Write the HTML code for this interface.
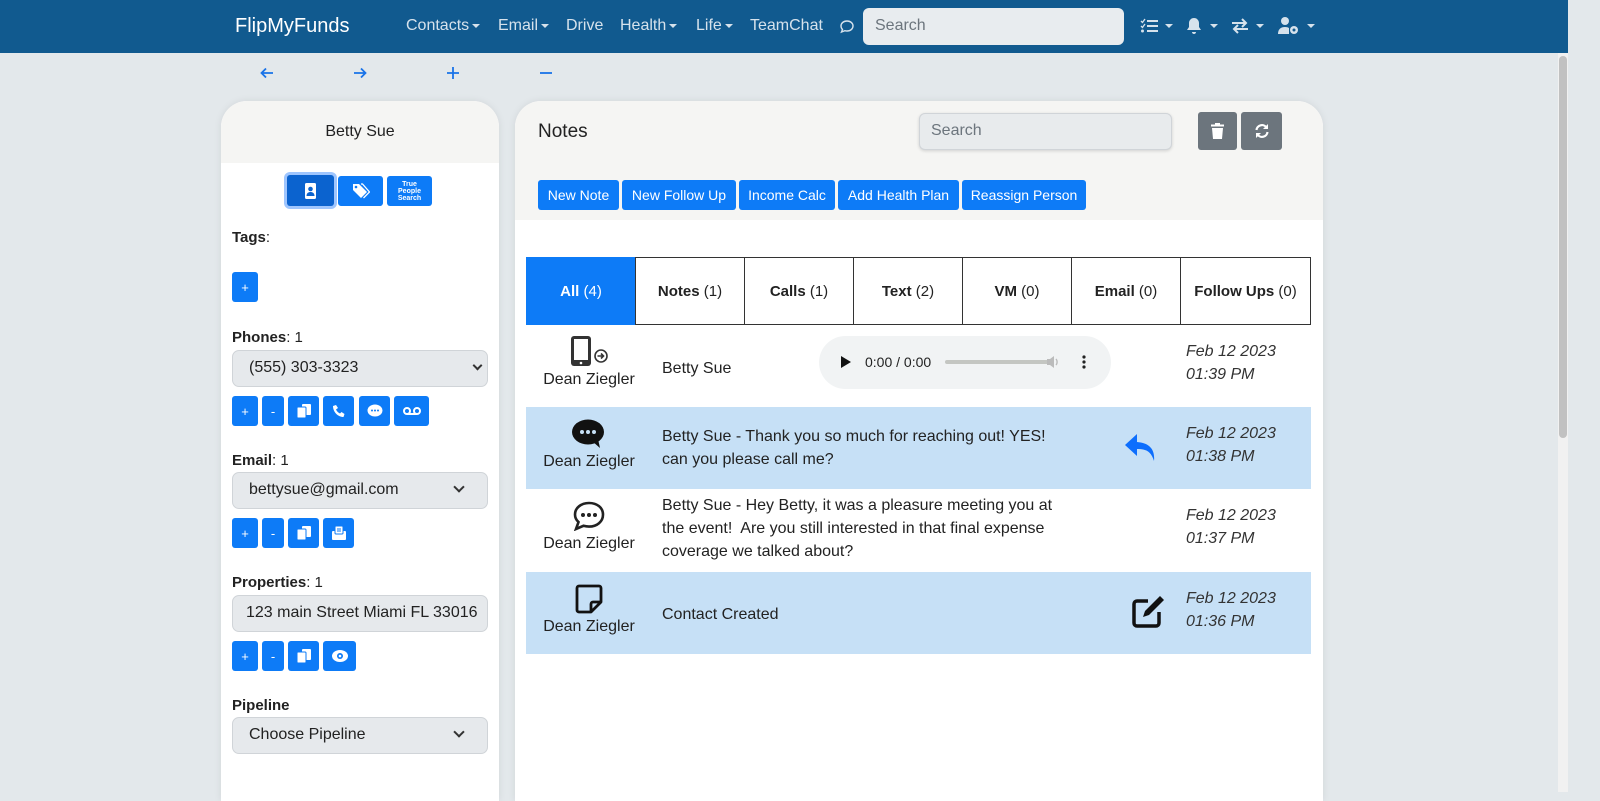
<!DOCTYPE html>
<html><head><meta charset="utf-8">
<style>
*{box-sizing:border-box;margin:0;padding:0}
body{width:1600px;height:792px;overflow:hidden;background:#e3e8eb;font-family:"Liberation Sans",sans-serif;color:#212529;position:relative}
.a{position:absolute}
.nav{left:0;top:0;width:1568px;height:53px;background:#115a8f}
.nav .t{color:#d6e2ec;font-size:16px;top:17px}
.car{display:inline-block;border-left:4px solid transparent;border-right:4px solid transparent;border-top:4px solid #d6e2ec;vertical-align:middle;margin-left:3px}
.btn{position:absolute;background:#0d7bf7;color:#fff;border-radius:3px;font-size:14px;display:flex;align-items:center;justify-content:center}
.sel{position:absolute;left:232px;width:256px;height:37px;background:#e6e9ec;border:1px solid #d0d4d8;border-radius:7px;font-size:16px;padding:8px 16px;color:#222}
.lbl{position:absolute;left:232px;font-size:15px;color:#222}
.lbl b{font-weight:bold}
.chev{position:absolute;right:16px;top:14px;width:8px;height:8px;border-right:2px solid #333;border-bottom:2px solid #333;transform:rotate(45deg)}
.tab{position:absolute;top:257px;height:68px;border:1px solid #333;font-size:15px;display:flex;align-items:center;justify-content:center;background:#fff;color:#222}
.row{position:absolute;left:526px;width:785px;height:82px}
.who{position:absolute;left:3px;width:120px;text-align:center;font-size:16px;color:#222;top:46px;white-space:nowrap}
.dt{position:absolute;left:660px;font-style:italic;font-size:16px;line-height:23px;color:#333;top:15px}
.msg{position:absolute;left:136px;font-size:16px;line-height:23px;color:#222}
.ic{position:absolute}
</style></head><body>
<div class="a nav">
 <div class="a" style="left:235px;top:15px;color:#fff;font-size:20px">FlipMyFunds</div>
 <div class="a t" style="left:406px">Contacts<span class="car"></span></div>
 <div class="a t" style="left:498px">Email<span class="car"></span></div>
 <div class="a t" style="left:566px">Drive</div>
 <div class="a t" style="left:620px">Health<span class="car"></span></div>
 <div class="a t" style="left:696px">Life<span class="car"></span></div>
 <div class="a t" style="left:750px">TeamChat</div>
 <svg class="a" style="left:839px;top:19px" width="16" height="16" viewBox="0 0 16 16"><path d="M8 2c3.5 0 6 2.2 6 5s-2.5 5-6 5c-.8 0-1.5-.1-2.2-.3L2.5 13l1-2.5C2.5 9.6 2 8.4 2 7c0-2.8 2.5-5 6-5z" fill="none" stroke="#d6e2ec" stroke-width="1.4"/></svg>
 <div class="a" style="left:863px;top:8px;width:261px;height:37px;background:#e8ecef;border-radius:6px;color:#6c757d;font-size:16px;padding:9px 12px">Search</div>
 <svg class="a" style="left:1140px;top:18px" width="18" height="16" viewBox="0 0 18 16"><g fill="#d6e2ec"><rect x="7" y="2" width="11" height="2"/><rect x="7" y="7" width="11" height="2"/><rect x="7" y="12" width="11" height="2"/><circle cx="2.5" cy="13" r="1.5"/></g><path d="M1 3l1.5 1.5L5 1M1 8l1.5 1.5L5 6" stroke="#d6e2ec" stroke-width="1.3" fill="none"/></svg>
 <span class="a car" style="left:1162px;top:24px"></span>
 <svg class="a" style="left:1186px;top:17px" width="16" height="18" viewBox="0 0 16 18"><path d="M8 1c-3 0-5 2.5-5 5v4L1 13h14l-2-3V6c0-2.5-2-5-5-5z M6 15h4c0 1.2-1 2-2 2s-2-.8-2-2z" fill="#d6e2ec"/></svg>
 <span class="a car" style="left:1207px;top:24px"></span>
 <svg class="a" style="left:1231px;top:17px" width="18" height="18" viewBox="0 0 18 18"><path d="M1 6h14M11 2l4 4-4 4M17 12H3M7 8l-4 4 4 4" stroke="#d6e2ec" stroke-width="2" fill="none"/></svg>
 <span class="a car" style="left:1253px;top:24px"></span>
 <svg class="a" style="left:1278px;top:16px" width="22" height="20" viewBox="0 0 22 20"><circle cx="7" cy="5" r="4" fill="#d6e2ec"/><path d="M0 18c0-5 3-7 7-7 2 0 3 .4 4 1v6z" fill="#d6e2ec"/><circle cx="16" cy="14" r="4" fill="#d6e2ec"/><circle cx="16" cy="14" r="1.5" fill="#115a8f"/></svg>
 <span class="a car" style="left:1304px;top:24px"></span>
</div>
<div class="a" style="left:1558px;top:53px;width:10px;height:739px;background:#f1f1f1"></div>
<div class="a" style="left:1559px;top:56px;width:8px;height:382px;background:#c1c1c1;border-radius:4px"></div>
<svg class="a" style="left:260px;top:67px" width="14" height="12" viewBox="0 0 14 12"><path d="M13 6H2M6 1.5L1.5 6 6 10.5" stroke="#1a73e8" stroke-width="1.8" fill="none"/></svg>
<svg class="a" style="left:353px;top:67px" width="14" height="12" viewBox="0 0 14 12"><path d="M1 6h11M8 1.5L12.5 6 8 10.5" stroke="#1a73e8" stroke-width="1.8" fill="none"/></svg>
<svg class="a" style="left:447px;top:67px" width="12" height="12" viewBox="0 0 12 12"><path d="M6 0v12M0 6h12" stroke="#1a73e8" stroke-width="1.8"/></svg>
<svg class="a" style="left:540px;top:67px" width="12" height="12" viewBox="0 0 12 12"><path d="M0 6h12" stroke="#1a73e8" stroke-width="1.8"/></svg>

<!-- left card -->
<div class="a" style="left:221px;top:101px;width:278px;height:700px;background:#fff;border-radius:26px 26px 0 0;overflow:hidden;box-shadow:0 0 8px rgba(0,0,0,.08)">
 <div style="height:62px;background:#f5f5f3;text-align:center;padding-top:22px;font-size:16px;color:#222">Betty Sue</div>
</div>
<div class="btn" style="left:287px;top:175px;width:47px;height:31px;background:#0b63cf;box-shadow:0 0 0 3px #9ec5fe"><svg width="14" height="16" viewBox="0 0 14 16"><rect x="1" y="0" width="11" height="16" rx="1.5" fill="#fff"/><circle cx="6.5" cy="6" r="2.3" fill="#0b63cf"/><path d="M2.5 13c0-3 2-4 4-4s4 1 4 4z" fill="#0b63cf"/></svg></div>
<div class="btn" style="left:338px;top:176px;width:45px;height:30px"><svg width="18" height="16" viewBox="0 0 18 16"><path d="M1 1h6l8 8-6 6-8-8z" fill="#fff"/><circle cx="4" cy="4" r="1.3" fill="#0d7bf7"/><path d="M9 1h1.5l7 8-6 6" stroke="#fff" stroke-width="1.3" fill="none"/></svg></div>
<div class="btn" style="left:387px;top:176px;width:45px;height:30px;font-size:7px;line-height:7px;text-align:center;font-weight:bold">True<br>People<br>Search</div>
<div class="lbl" style="top:229px"><b>Tags</b>:</div>
<div class="btn" style="left:232px;top:272px;width:26px;height:30px;font-size:13px">+</div>
<div class="lbl" style="top:329px"><b>Phones</b>: 1</div>
<div class="sel" style="top:350px;padding-left:16px">(555) 303-3323<div class="chev" style="right:6px;top:11px;width:7px;height:7px"></div></div>
<div class="btn" style="left:232px;top:396px;width:26px;height:30px;font-size:13px">+</div>
<div class="btn" style="left:262px;top:396px;width:22px;height:30px;font-size:13px">-</div>
<div class="btn" style="left:288px;top:396px;width:31px;height:30px"><svg width="14" height="14"><rect x="5" y="0" width="9" height="11" rx="1" fill="#fff"/><rect x="0" y="3" width="9" height="11" rx="1" fill="#fff" stroke="#0d7bf7"/></svg></div>
<div class="btn" style="left:323px;top:396px;width:31px;height:30px"><svg width="14" height="14" viewBox="0 0 14 14"><path d="M1 2l3-1 2 3-2 1.5c1 2 2 3 4 4L9.5 8l3 2-1 3C6 13 1 8 1 2z" fill="#fff"/></svg></div>
<div class="btn" style="left:359px;top:396px;width:31px;height:30px"><svg width="16" height="14"><ellipse cx="8" cy="6.5" rx="7.5" ry="6" fill="#fff"/><circle cx="5" cy="6.5" r="1" fill="#0d7bf7"/><circle cx="8" cy="6.5" r="1" fill="#0d7bf7"/><circle cx="11" cy="6.5" r="1" fill="#0d7bf7"/></svg></div>
<div class="btn" style="left:394px;top:396px;width:35px;height:30px"><svg width="18" height="10"><circle cx="4" cy="5" r="3" stroke="#fff" stroke-width="2" fill="none"/><circle cx="14" cy="5" r="3" stroke="#fff" stroke-width="2" fill="none"/><path d="M4 8h10" stroke="#fff" stroke-width="2"/></svg></div>
<div class="lbl" style="top:452px"><b>Email</b>: 1</div>
<div class="sel" style="top:472px">bettysue@gmail.com<div class="chev" style="right:24px;top:10px"></div></div>
<div class="btn" style="left:232px;top:518px;width:26px;height:30px;font-size:13px">+</div>
<div class="btn" style="left:262px;top:518px;width:22px;height:30px;font-size:13px">-</div>
<div class="btn" style="left:288px;top:518px;width:31px;height:30px"><svg width="14" height="14"><rect x="5" y="0" width="9" height="11" rx="1" fill="#fff"/><rect x="0" y="3" width="9" height="11" rx="1" fill="#fff" stroke="#0d7bf7"/></svg></div>
<div class="btn" style="left:323px;top:518px;width:31px;height:30px"><svg width="14" height="14"><rect x="0" y="5" width="14" height="9" rx="1" fill="#fff"/><rect x="3" y="0" width="8" height="8" rx="1" fill="#fff" stroke="#0d7bf7"/><path d="M5 3h4M5 5h4" stroke="#0d7bf7"/></svg></div>
<div class="lbl" style="top:574px"><b>Properties</b>: 1</div>
<div class="sel" style="top:595px;padding-left:13px;white-space:nowrap;overflow:hidden">123 main Street Miami FL 33016</div>
<div class="btn" style="left:232px;top:641px;width:26px;height:30px;font-size:13px">+</div>
<div class="btn" style="left:262px;top:641px;width:22px;height:30px;font-size:13px">-</div>
<div class="btn" style="left:288px;top:641px;width:31px;height:30px"><svg width="14" height="14"><rect x="5" y="0" width="9" height="11" rx="1" fill="#fff"/><rect x="0" y="3" width="9" height="11" rx="1" fill="#fff" stroke="#0d7bf7"/></svg></div>
<div class="btn" style="left:323px;top:641px;width:33px;height:30px"><svg width="16" height="12"><ellipse cx="8" cy="6" rx="8" ry="6" fill="#fff"/><circle cx="8" cy="6" r="3" fill="#0d7bf7"/><circle cx="8" cy="6" r="1.3" fill="#fff"/></svg></div>
<div class="lbl" style="top:697px"><b>Pipeline</b></div>
<div class="sel" style="top:717px">Choose Pipeline<div class="chev" style="right:24px;top:10px"></div></div>

<!-- right card -->
<div class="a" style="left:515px;top:101px;width:808px;height:700px;background:#fff;border-radius:26px 26px 0 0;overflow:hidden;box-shadow:0 0 8px rgba(0,0,0,.08)">
 <div style="height:119px;background:#f5f5f3"></div>
</div>
<div class="a" style="left:538px;top:121px;font-size:19px;color:#222">Notes</div>
<div class="a" style="left:919px;top:113px;width:253px;height:37px;background:#e8ebed;border:1px solid #d0d4d8;border-radius:6px;color:#6c757d;font-size:16px;padding:8px 11px;box-shadow:0 1px 3px rgba(0,0,0,.15)">Search</div>
<div class="btn" style="left:1198px;top:112px;width:39px;height:38px;background:#6c757d"><svg width="13" height="16" viewBox="0 0 13 16"><rect x="0" y="1.5" width="13" height="2" fill="#fff"/><rect x="4" y="0" width="5" height="2" fill="#fff"/><path d="M1 5h11l-1 11H2z" fill="#fff"/></svg></div>
<div class="btn" style="left:1241px;top:112px;width:41px;height:38px;background:#6c757d"><svg width="16" height="16" viewBox="0 0 16 16"><path d="M2.5 7A5.5 5.5 0 0 1 12.5 4.5M13.5 9A5.5 5.5 0 0 1 3.5 11.5" stroke="#fff" stroke-width="2.2" fill="none"/><path d="M14 1v5h-5zM2 15v-5h5z" fill="#fff"/></svg></div>
<div class="btn" style="left:538px;top:180px;width:81px;height:30px">New Note</div>
<div class="btn" style="left:622px;top:180px;width:114px;height:30px">New Follow Up</div>
<div class="btn" style="left:739px;top:180px;width:96px;height:30px">Income Calc</div>
<div class="btn" style="left:838px;top:180px;width:121px;height:30px">Add Health Plan</div>
<div class="btn" style="left:962px;top:180px;width:124px;height:30px">Reassign Person</div>

<div class="tab" style="left:526px;width:110px;background:#0d7bf7;color:#fff;border-color:#0d7bf7"><b>All</b>&nbsp;(4)</div>
<div class="tab" style="left:635px;width:110px"><b>Notes</b>&nbsp;(1)</div>
<div class="tab" style="left:744px;width:110px"><b>Calls</b>&nbsp;(1)</div>
<div class="tab" style="left:853px;width:110px"><b>Text</b>&nbsp;(2)</div>
<div class="tab" style="left:962px;width:110px"><b>VM</b>&nbsp;(0)</div>
<div class="tab" style="left:1071px;width:110px"><b>Email</b>&nbsp;(0)</div>
<div class="tab" style="left:1180px;width:131px"><b>Follow Ups</b>&nbsp;(0)</div>

<div class="row" style="top:325px;background:#fff">
 <svg class="ic" style="left:44px;top:10px" width="40" height="32" viewBox="0 0 40 32"><rect x="1" y="1" width="20" height="30" rx="3" fill="#333"/><rect x="4" y="4" width="14" height="21" fill="#fff"/><circle cx="11" cy="28" r="1.3" fill="#fff"/><circle cx="31" cy="21" r="6" stroke="#333" stroke-width="1.6" fill="none"/><path d="M27.5 21h6M31 18.5l2.5 2.5-2.5 2.5" stroke="#333" stroke-width="1.6" fill="none"/></svg>
 <div class="who">Dean Ziegler</div>
 <div class="msg" style="top:32px">Betty Sue</div>
 <div class="a" style="left:293px;top:11px;width:292px;height:53px;background:#f1f3f4;border-radius:27px"></div>
 <svg class="a" style="left:315px;top:31px" width="10" height="12"><path d="M0 0l10 6-10 6z" fill="#111"/></svg>
 <div class="a" style="left:339px;top:29px;font-size:14px;color:#222">0:00 / 0:00</div>
 <div class="a" style="left:419px;top:35px;width:104px;height:4px;background:#c4c6c2;border-radius:2px"></div>
 <svg class="a" style="left:520px;top:30px" width="14" height="14"><path d="M1 4h3l4-3v12l-4-3H1z" fill="#bbb"/><path d="M10 4c1.5 1.5 1.5 4.5 0 6" stroke="#bbb" stroke-width="1.4" fill="none"/></svg>
 <svg class="a" style="left:556px;top:30px" width="4" height="14"><circle cx="2" cy="2" r="1.6" fill="#222"/><circle cx="2" cy="7" r="1.6" fill="#222"/><circle cx="2" cy="12" r="1.6" fill="#222"/></svg>
 <div class="dt">Feb 12 2023<br>01:39 PM</div>
</div>
<div class="row" style="top:407px;background:#c6e0f6">
 <svg class="ic" style="left:46px;top:12px" width="34" height="30" viewBox="0 0 34 30"><ellipse cx="16" cy="13" rx="16" ry="12.5" fill="#111"/><path d="M20 22l8 7-2-9z" fill="#111"/><circle cx="10" cy="13" r="2" fill="#c6e0f6"/><circle cx="16" cy="13" r="2" fill="#c6e0f6"/><circle cx="22" cy="13" r="2" fill="#c6e0f6"/></svg>
 <div class="who">Dean Ziegler</div>
 <div class="msg" style="top:18px">Betty Sue - Thank you so much for reaching out! YES!<br>can you please call me?</div>
 <svg class="ic" style="left:598px;top:26px" width="34" height="30" viewBox="0 0 34 30"><path d="M13 1L1 12l12 11v-7c9 0 14 2 17 12 1-10-3-18-17-19z" fill="#0d6efd"/></svg>
 <div class="dt">Feb 12 2023<br>01:38 PM</div>
</div>
<div class="row" style="top:489px;background:#fff">
 <svg class="ic" style="left:47px;top:12px" width="32" height="30" viewBox="0 0 32 30"><path d="M16 2C8 2 2 7 2 13.5c0 3 1.3 5.6 3.5 7.6L3 28l7.5-3.2c1.7.5 3.5.8 5.5.8 8 0 14-5 14-12S24 2 16 2z" fill="none" stroke="#222" stroke-width="2.6"/><circle cx="10" cy="14" r="2" fill="#222"/><circle cx="16" cy="14" r="2" fill="#222"/><circle cx="22" cy="14" r="2" fill="#222"/></svg>
 <div class="who">Dean Ziegler</div>
 <div class="msg" style="top:5px">Betty Sue - Hey Betty, it was a pleasure meeting you at<br>the event!&nbsp; Are you still interested in that final expense<br>coverage we talked about?</div>
 <div class="dt">Feb 12 2023<br>01:37 PM</div>
</div>
<div class="row" style="top:572px;background:#c6e0f6">
 <svg class="ic" style="left:49px;top:12px" width="28" height="30" viewBox="0 0 28 30"><path d="M4 2h20a2 2 0 0 1 2 2v14l-10 10H4a2 2 0 0 1-2-2V4a2 2 0 0 1 2-2z M26 18h-8a2 2 0 0 0-2 2v8" fill="none" stroke="#111" stroke-width="2.8" stroke-linejoin="round"/></svg>
 <div class="who">Dean Ziegler</div>
 <div class="msg" style="top:31px">Contact Created</div>
 <svg class="ic" style="left:606px;top:22px" width="34" height="34" viewBox="0 0 34 34"><path d="M16 7H5a3 3 0 0 0-3 3v19a3 3 0 0 0 3 3h19a3 3 0 0 0 3-3V18" fill="none" stroke="#111" stroke-width="3.5"/><path d="M28 2l4 4-15 15-6 2 2-6z" fill="#111"/></svg>
 <div class="dt">Feb 12 2023<br>01:36 PM</div>
</div>
</body></html>
